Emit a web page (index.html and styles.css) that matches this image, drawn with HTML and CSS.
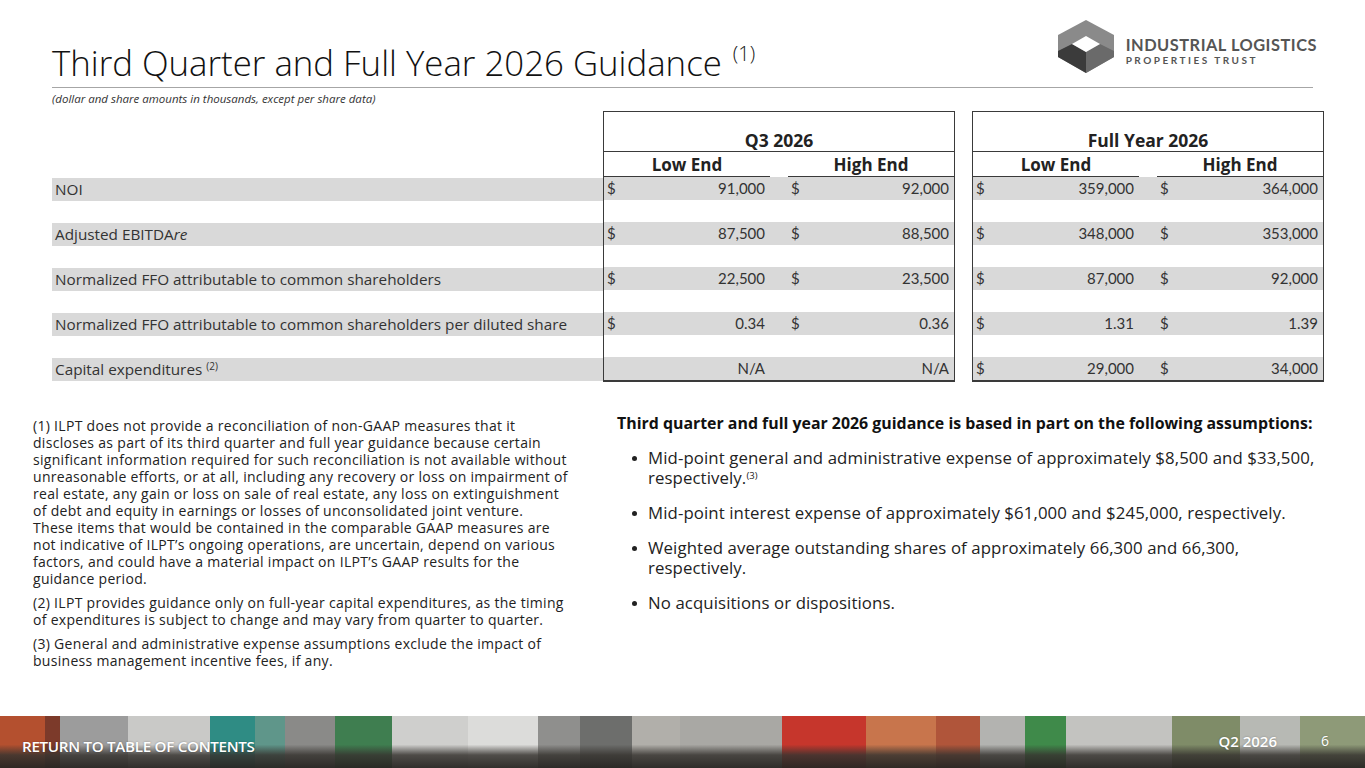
FILE: index.html
```html
<!DOCTYPE html>
<html lang="en">
<head>
<meta charset="utf-8">
<title>Third Quarter and Full Year 2026 Guidance</title>
<link rel="stylesheet" href="styles.css">
</head>
<body>
<div class="page">
  <header class="header">
    <h1 class="title">Third Quarter and Full Year 2026 Guidance <sup>(1)</sup></h1>
    <div class="logo">
      <svg class="logo-mark" viewBox="0 0 60 54" width="60" height="54" aria-hidden="true">
        <polygon points="30,0 58,15 58,37 30,53 2,37 2,15" fill="#8a8a8a"/>
        <polygon points="2,31 16,24 30,32 30,53 2,37" fill="#3b3b3b"/>
        <polygon points="30,32 44,24 58,31 58,37 30,53" fill="#6a6a6a"/>
        <polygon points="30,16 44,24 30,32 16,24" fill="#ffffff"/>
      </svg>
      <div class="logo-text">
        <div class="logo-line1">INDUSTRIAL LOGISTICS</div>
        <div class="logo-line2">PROPERTIES TRUST</div>
      </div>
    </div>
  </header>
  <p class="subtitle">(dollar and share amounts in thousands, except per share data)</p>

  <section class="guidance">
    <div class="labels">
      <div class="head-spacer"></div>
      <div class="band label">NOI</div>
      <div class="gap"></div>
      <div class="band label">Adjusted EBITDA<i>re</i></div>
      <div class="gap"></div>
      <div class="band label">Normalized FFO attributable to common shareholders</div>
      <div class="gap"></div>
      <div class="band label">Normalized FFO attributable to common shareholders per diluted share</div>
      <div class="gap"></div>
      <div class="band label">Capital expenditures <sup>(2)</sup></div>
    </div>

    <div class="box">
      <div class="box-title">Q3 2026</div>
      <div class="box-sub">
        <div class="sub-col">Low End</div>
        <div class="sub-col">High End</div>
      </div>
      <div class="band vals"><div class="val"><span>$</span><span>91,000</span></div><div class="val"><span>$</span><span>92,000</span></div></div>
      <div class="gap"></div>
      <div class="band vals"><div class="val"><span>$</span><span>87,500</span></div><div class="val"><span>$</span><span>88,500</span></div></div>
      <div class="gap"></div>
      <div class="band vals"><div class="val"><span>$</span><span>22,500</span></div><div class="val"><span>$</span><span>23,500</span></div></div>
      <div class="gap"></div>
      <div class="band vals"><div class="val"><span>$</span><span>0.34</span></div><div class="val"><span>$</span><span>0.36</span></div></div>
      <div class="gap"></div>
      <div class="band vals"><div class="val"><span></span><span>N/A</span></div><div class="val"><span></span><span>N/A</span></div></div>
    </div>

    <div class="box">
      <div class="box-title">Full Year 2026</div>
      <div class="box-sub">
        <div class="sub-col">Low End</div>
        <div class="sub-col">High End</div>
      </div>
      <div class="band vals"><div class="val"><span>$</span><span>359,000</span></div><div class="val"><span>$</span><span>364,000</span></div></div>
      <div class="gap"></div>
      <div class="band vals"><div class="val"><span>$</span><span>348,000</span></div><div class="val"><span>$</span><span>353,000</span></div></div>
      <div class="gap"></div>
      <div class="band vals"><div class="val"><span>$</span><span>87,000</span></div><div class="val"><span>$</span><span>92,000</span></div></div>
      <div class="gap"></div>
      <div class="band vals"><div class="val"><span>$</span><span>1.31</span></div><div class="val"><span>$</span><span>1.39</span></div></div>
      <div class="gap"></div>
      <div class="band vals"><div class="val"><span>$</span><span>29,000</span></div><div class="val"><span>$</span><span>34,000</span></div></div>
    </div>
  </section>

  <section class="lower">
    <div class="notes">
      <p>(1) ILPT does not provide a reconciliation of non-GAAP measures that it discloses as part of its third quarter and full year guidance because certain significant information required for such reconciliation is not available without unreasonable efforts, or at all, including any recovery or loss on impairment of real estate, any gain or loss on sale of real estate, any loss on extinguishment of debt and equity in earnings or losses of unconsolidated joint venture.<br>These items that would be contained in the comparable GAAP measures are not indicative of ILPT’s ongoing operations, are uncertain, depend on various factors, and could have a material impact on ILPT’s GAAP results for the guidance period.</p>
      <p>(2) ILPT provides guidance only on full-year capital expenditures, as the timing of expenditures is subject to change and may vary from quarter to quarter.</p>
      <p>(3) General and administrative expense assumptions exclude the impact of business management incentive fees, if any.</p>
    </div>
    <div class="assumptions">
      <h2>Third quarter and full year 2026 guidance is based in part on the following assumptions:</h2>
      <ul>
        <li>Mid-point general and administrative expense of approximately $8,500 and $33,500, respectively.<sup>(3)</sup></li>
        <li>Mid-point interest expense of approximately $61,000 and $245,000, respectively.</li>
        <li>Weighted average outstanding shares of approximately 66,300 and 66,300, respectively.</li>
        <li>No acquisitions or dispositions.</li>
      </ul>
    </div>
  </section>

  <footer class="footer">
    <a class="toc" href="#">RETURN TO TABLE OF CONTENTS</a>
    <div class="footer-right">
      <span class="period">Q2 2026</span>
      <span class="pageno">6</span>
    </div>
  </footer>
</div>
</body>
</html>
```

FILE: styles.css
```css
* { box-sizing: border-box; }
html, body { margin: 0; padding: 0; background: #fff; }
body { font-family: "Open Sans", Lato, "Liberation Sans", sans-serif; color: #222; }

.page {
  width: 1365px;
  height: 768px;
  overflow: hidden;
  display: flex;
  flex-direction: column;
}

/* Header */
.header {
  margin: 0 52px;
  height: 88px;
  border-bottom: 1px solid #a6a6a6;
  display: flex;
  justify-content: space-between;
  align-items: flex-end;
}
.title {
  margin: 0 0 -2px 0;
  font-weight: 300;
  font-size: 34.8px;
  line-height: 40px;
  color: #111;
}
.title sup {
  font-size: 20px;
  vertical-align: 0;
  position: relative;
  top: -15px;
  margin-left: 2px;
}
.logo {
  align-self: flex-start;
  margin-top: 20px;
  margin-right: -4px;
  display: flex;
  align-items: flex-start;
  gap: 10px;
}
.logo-mark { display: block; }
.logo-text { color: #555; font-weight: 700; font-family: Lato, "Open Sans", sans-serif; padding-top: 17px; }
.logo-line1 { font-size: 16.4px; line-height: 16px; letter-spacing: 0.5px; }
.logo-line2 { font-size: 10px; line-height: 12px; letter-spacing: 2.5px; margin-top: 1px; }

.subtitle {
  margin: 4px 52px 0;
  font-size: 11.5px;
  font-style: italic;
  color: #333;
  line-height: 14px;
}

/* Guidance table */
.guidance {
  margin: 5px 0 0 52px;
  display: flex;
  align-items: flex-start;
}
.labels { width: 551px; }
.head-spacer { height: 67px; }
.band { height: 23px; background: #d9d9d9; }
.gap { height: 22px; }
.label {
  font-size: 15.3px;
  line-height: 23px;
  color: #333;
  padding-left: 3px;
  white-space: nowrap;
}
.label sup { font-size: 10px; vertical-align: 0; position: relative; top: -5px; }

.box {
  width: 352px;
  border: 1px solid #3a3a3a;
  border-bottom-width: 2px;
  margin-right: 17px;
}
.box:last-child { margin-right: 0; }
.box-title {
  height: 40px;
  border-bottom: 1px solid #3a3a3a;
  text-align: center;
  font-weight: 700;
  font-size: 17.5px;
  line-height: 18px;
  padding-top: 19px;
  color: #222;
}
.box-sub {
  display: flex;
  justify-content: space-between;
}
.sub-col {
  width: 166px;
  height: 25px;
  border-bottom: 1px solid #3a3a3a;
  text-align: center;
  font-weight: 700;
  font-size: 17px;
  line-height: 25px;
  color: #222;
}
.vals {
  display: flex;
  justify-content: space-between;
  font-family: Lato, "Open Sans", sans-serif;
  font-size: 15px;
  line-height: 23px;
  color: #333;
}
.val {
  width: 166px;
  display: flex;
  justify-content: space-between;
  padding: 0 5px 0 3px;
}

/* Lower section */
.lower {
  display: flex;
  margin-top: 35px;
}
.notes {
  width: 570px;
  padding-left: 33px;
  font-size: 14px;
  letter-spacing: 0.3px;
  line-height: 17px;
  color: #222;
}
.notes p { margin: 0 0 7px; }
.assumptions { padding-left: 47px; width: 752px; }
.assumptions h2 {
  margin: -4px 0 0;
  font-size: 15.9px;
  line-height: 20px;
  font-weight: 700;
  color: #111;
}
.assumptions ul {
  margin: 15px 0 0;
  padding: 0;
  list-style: none;
}
.assumptions li {
  position: relative;
  padding-left: 31px;
  font-size: 16.8px;
  line-height: 20px;
  color: #222;
  margin-bottom: 15px;
  letter-spacing: 0.1px;
}
.assumptions li::before {
  content: "";
  position: absolute;
  left: 15px;
  top: 8px;
  width: 5px;
  height: 5px;
  border-radius: 50%;
  background: #222;
}
.assumptions sup { font-size: 9.5px; line-height: 0; vertical-align: 0; position: relative; top: -5px; }

/* Footer photo strip */
.footer {
  margin-top: auto;
  height: 52px;
  display: flex;
  justify-content: space-between;
  align-items: flex-start;
  padding: 0 36px 0 22px;
  background:
    linear-gradient(to bottom, rgba(255,255,255,0) 0%, rgba(255,255,255,0) 55%, rgba(55,52,48,0.85) 75%, rgba(40,38,35,0.95) 100%),
    linear-gradient(to right,
      #b4502f 0px, #b4502f 45px,
      #7c3a2a 45px, #7c3a2a 60px,
      #9c9c9c 60px, #9c9c9c 128px,
      #c9c9c7 128px, #c9c9c7 210px,
      #2f8c84 210px, #2f8c84 255px,
      #5f968a 255px, #5f968a 285px,
      #8a8a88 285px, #8a8a88 335px,
      #3f7e50 335px, #3f7e50 392px,
      #cfcfcd 392px, #cfcfcd 468px,
      #dcdcda 468px, #dcdcda 538px,
      #8f8f8d 538px, #8f8f8d 580px,
      #6d6e6c 580px, #6d6e6c 632px,
      #b1afaa 632px, #b1afaa 680px,
      #a9a8a4 680px, #a9a8a4 782px,
      #c6362c 782px, #c6362c 866px,
      #c8754c 866px, #c8754c 936px,
      #b0553a 936px, #b0553a 980px,
      #b3b3b0 980px, #b3b3b0 1025px,
      #3f8a4a 1025px, #3f8a4a 1066px,
      #c3c3c0 1066px, #c3c3c0 1172px,
      #7f8c68 1172px, #7f8c68 1240px,
      #b7b9b4 1240px, #b7b9b4 1300px,
      #8e9a78 1300px, #8e9a78 1365px);
}
.toc {
  margin-top: 22px;
  color: #fff;
  text-decoration: none;
  font-weight: 600;
  font-size: 15.2px;
  line-height: 17px;
  letter-spacing: -0.3px;
  text-shadow: 0 0 2px rgba(0,0,0,0.35);
}
.footer-right {
  display: flex;
  gap: 44px;
  margin-top: 17px;
  color: #fff;
  font-size: 15px;
  line-height: 16px;
  font-weight: 600;
  text-shadow: 0 0 2px rgba(0,0,0,0.3);
}
.pageno { font-weight: 400; font-size: 14px; }
```
